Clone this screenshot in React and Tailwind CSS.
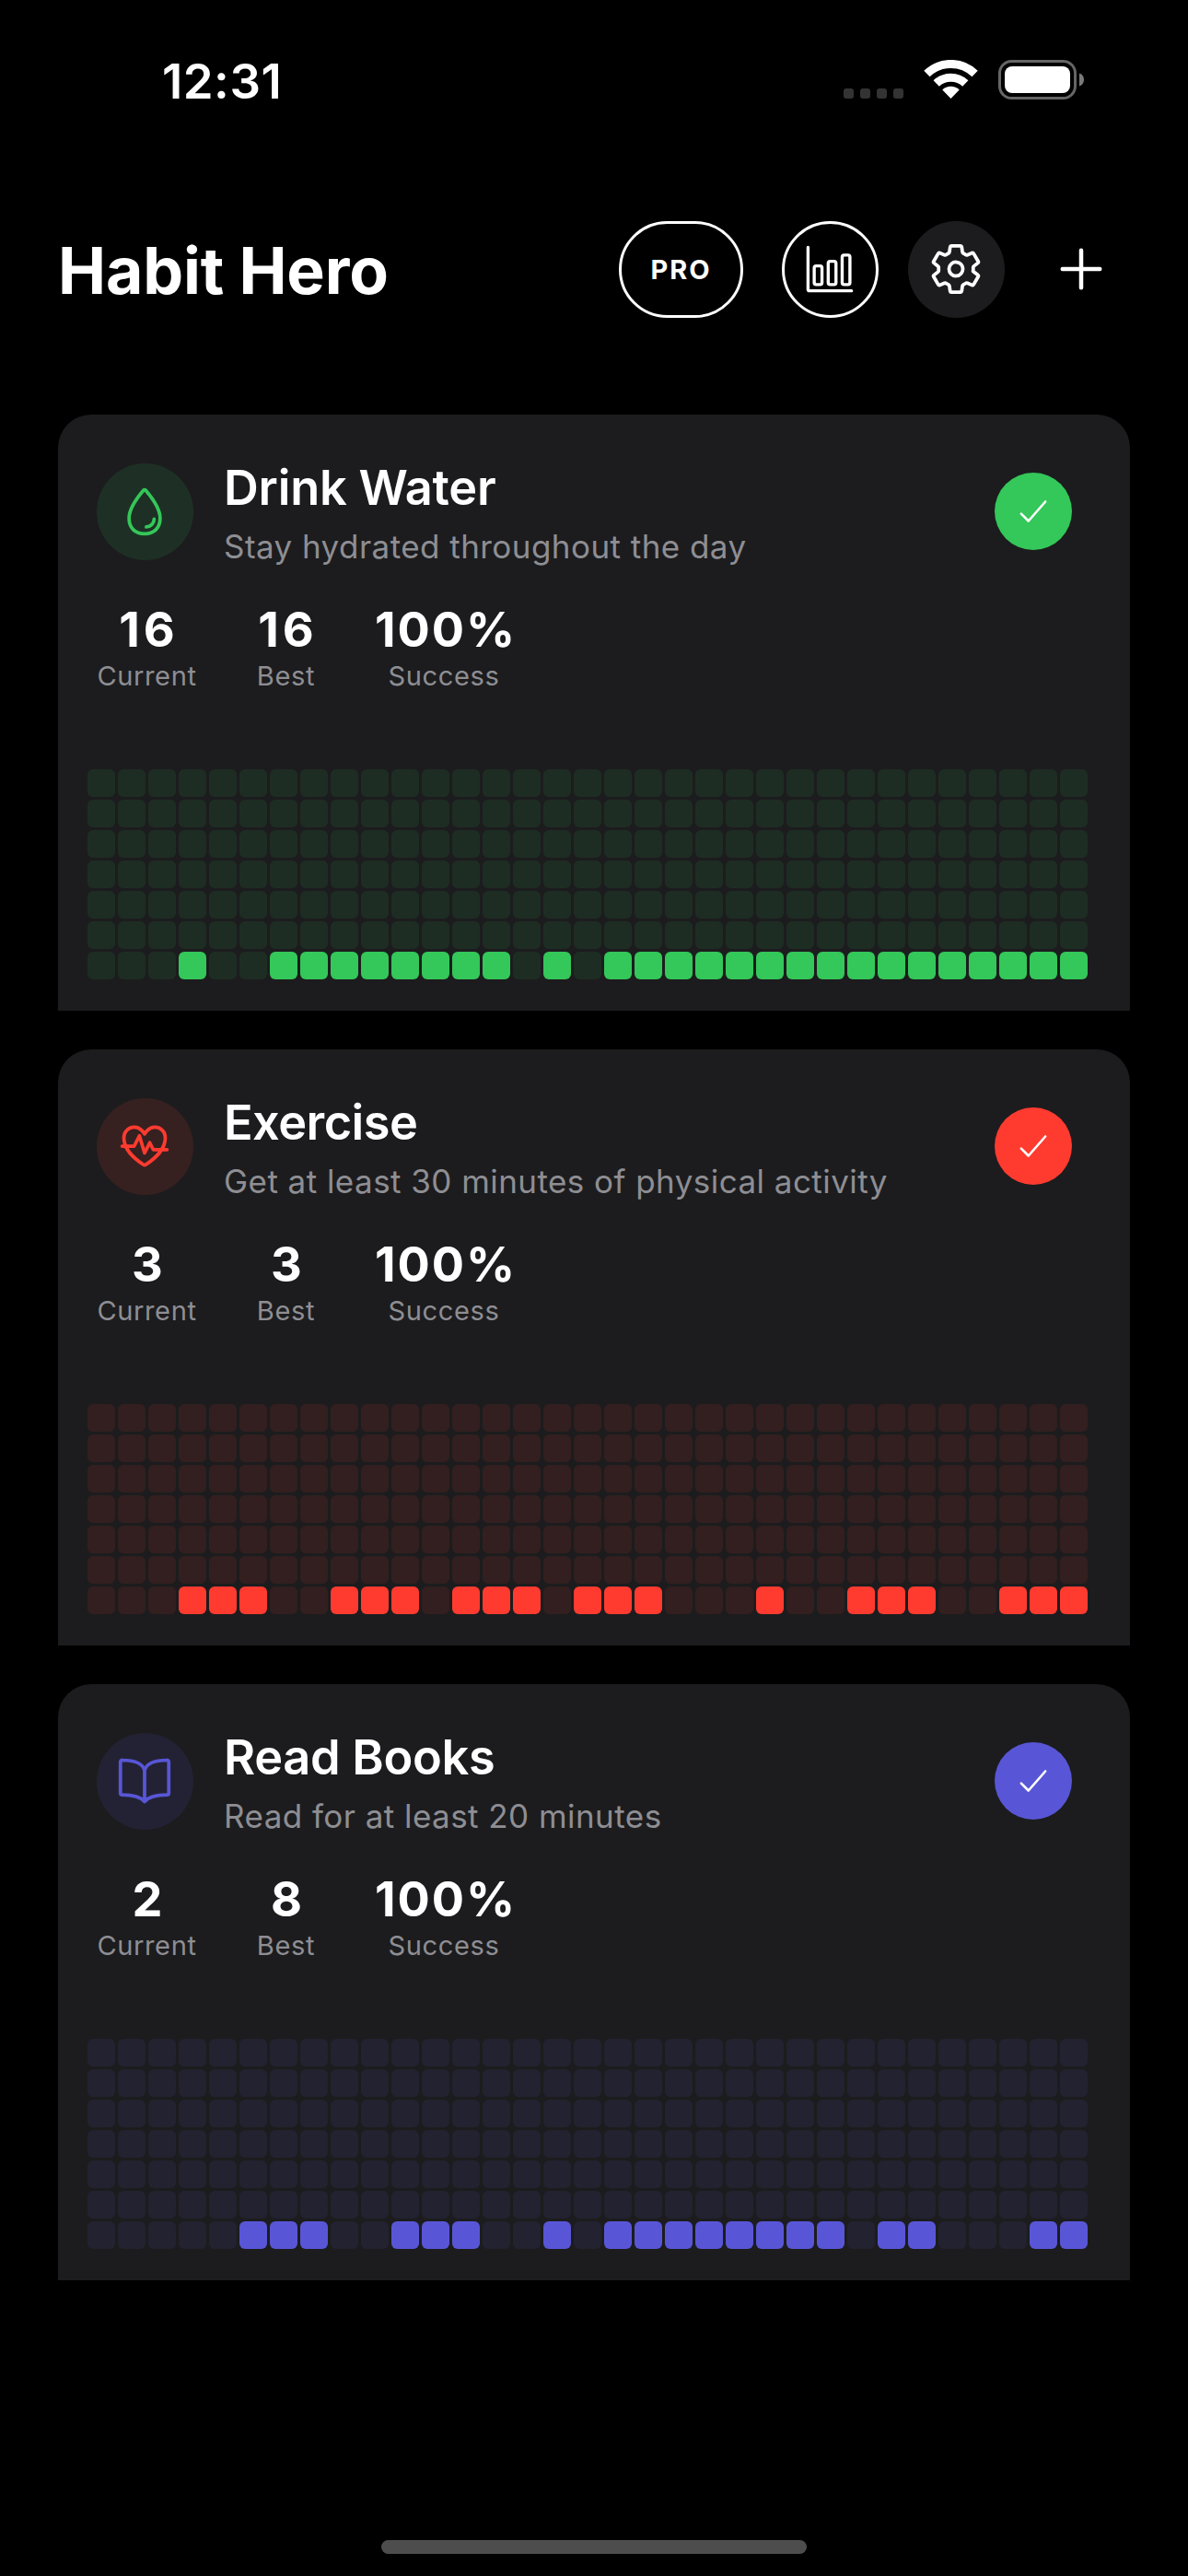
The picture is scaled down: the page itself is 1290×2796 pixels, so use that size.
import {
  IoAdd,
  IoBarChartOutline,
  IoBookOutline,
  IoCheckmark,
  IoFitnessOutline,
  IoSettingsOutline,
  IoWaterOutline,
} from "react-icons/io5";

const COLUMNS = 33;
const ROWS = 7;

const range = (from, to) => Array.from({ length: to - from + 1 }, (_, i) => from + i);

const HABITS = [
  {
    name: "Drink Water",
    description: "Stay hydrated throughout the day",
    Icon: IoWaterOutline,
    current: "16",
    best: "16",
    done: [3, ...range(6, 13), 15, ...range(17, 32)],
    tracking: "tracking-[-0.2px]",
    text: "text-[#34c759]",
    solid: "bg-[#34c759]",
    tint: "bg-[#34c759]/12",
    cell: "bg-[#34c759]/10",
  },
  {
    name: "Exercise",
    description: "Get at least 30 minutes of physical activity",
    Icon: IoFitnessOutline,
    current: "3",
    best: "3",
    done: [3, 4, 5, 8, 9, 10, 12, 13, 14, 16, 17, 18, 22, 25, 26, 27, 30, 31, 32],
    tracking: "tracking-[-0.55px]",
    text: "text-[#ff3b30]",
    solid: "bg-[#ff3b30]",
    tint: "bg-[#ff3b30]/12",
    cell: "bg-[#ff3b30]/10",
  },
  {
    name: "Read Books",
    description: "Read for at least 20 minutes",
    Icon: IoBookOutline,
    current: "2",
    best: "8",
    done: [5, 6, 7, 10, 11, 12, 15, ...range(17, 24), 26, 27, 31, 32],
    tracking: "tracking-[-0.3px]",
    text: "text-[#5856d6]",
    solid: "bg-[#5856d6]",
    tint: "bg-[#5856d6]/12",
    cell: "bg-[#5856d6]/10",
  },
];

function StatusBar() {
  return (
    <div className="flex h-[240px] items-start justify-between pr-[113px] pl-[176px]">
      <span className="mt-[58px] text-[52.7px] leading-[60px] font-semibold tracking-[0.5px]">
        12:31
      </span>
      <div className="mt-[65px] flex h-[43px] items-start">
        <div className="mt-[31px] flex gap-[7px]">
          {range(0, 3).map((i) => (
            <div key={i} className="size-[11px] rounded-[3px] bg-[#333333]" />
          ))}
        </div>
        <svg className="ml-[22px]" width="59" height="43" viewBox="-29.5 -42 59 43" fill="none">
          <path d="M-26.1 -27A37.5 37.5 0 0 1 26.1 -27" stroke="#fff" strokeWidth="9" />
          <path d="M-15.8 -16.4A22.8 22.8 0 0 1 15.8 -16.4" stroke="#fff" strokeWidth="9" />
          <path d="M0 0L-9.2 -9.5A13.2 13.2 0 0 1 9.2 -9.5Z" fill="#fff" />
        </svg>
        <svg className="ml-[22px]" width="93" height="43" viewBox="0 0 93 43" fill="none">
          <rect x="1.5" y="1.5" width="82" height="40" rx="13" stroke="#666" strokeWidth="3" />
          <rect x="7" y="7" width="71" height="29" rx="8" fill="#fff" />
          <path d="M88 14.5C91 15.5 93 18 93 21.5S91 27.500 88 28.500Z" fill="#7a7a7a" />
        </svg>
      </div>
    </div>
  );
}

function Header() {
  return (
    <header className="flex h-[105px] items-center px-[63px]">
      <h1 className="mt-[2px] flex-1 text-[69.7px] leading-[85px] font-bold tracking-[-0.15px]">
        Habit Hero
      </h1>
      <button className="flex h-[105px] w-[135px] items-center justify-center rounded-full border-3 border-white text-[29px] font-bold tracking-[2px]">
        PRO
      </button>
      <button className="ml-[42px] flex size-[105px] items-center justify-center rounded-full border-3 border-white">
        <IoBarChartOutline className="mr-px mb-px size-[54px]" />
      </button>
      <button className="ml-[32px] flex size-[105px] items-center justify-center rounded-full bg-[#1c1c1e]">
        <IoSettingsOutline className="mr-px mb-px size-[60px]" />
      </button>
      <button className="ml-[31px] flex size-[105px] items-center justify-center">
        <IoAdd className="mr-px mb-px size-[72px]" />
      </button>
    </header>
  );
}

// Letter spacing of the figures by length, with padding in front to keep them centred.
const FIGURE_SPACING = {
  1: "pl-px",
  2: "tracking-[4px] pl-[4px]",
  4: "tracking-[2px] pl-[4px]",
};

function Stat({ value, label, width }) {
  return (
    <div className={`flex flex-col items-center whitespace-nowrap ${width}`}>
      <span
        className={`text-[52.3px] leading-[62px] font-bold ${FIGURE_SPACING[value.length]}`}
      >
        {value}
      </span>
      <span className="mt-px text-[29.1px] leading-[37px] tracking-[0.6px] text-[#8e8e93]">
        {label}
      </span>
    </div>
  );
}

function HabitCard({ habit }) {
  const { Icon } = habit;
  return (
    <section className="h-[647px] rounded-t-[36px] bg-[#1c1c1e]">
      <div className="flex h-[202px] items-start pt-[47px] pr-[63px] pl-[42px]">
        <div
          className={`mt-[6px] flex size-[105px] items-center justify-center rounded-full ${habit.tint} ${habit.text}`}
        >
          <Icon className="mr-px mb-px size-[60px]" />
        </div>
        <div className="ml-[33px] flex-1">
          <h2 className={`text-[52.3px] leading-[64px] font-semibold ${habit.tracking}`}>
            {habit.name}
          </h2>
          <p className="mt-[10px] text-[35px] leading-[44px] tracking-[0.45px] text-[#8e8e93]">
            {habit.description}
          </p>
        </div>
        <button
          className={`mt-[16px] flex size-[84px] items-center justify-center rounded-full ${habit.solid}`}
        >
          <IoCheckmark className="size-[42px]" />
        </button>
      </div>
      <div className="flex h-[183px] gap-[64px] pl-[42px]">
        <Stat value={habit.current} label="Current" width="w-[109px]" />
        <Stat value={habit.best} label="Best" width="w-[65px]" />
        <Stat value="100%" label="Success" width="w-[150px]" />
      </div>
      <div className="ml-[32px] grid w-max grid-cols-[repeat(33,30px)] gap-[3px]">
        {range(0, COLUMNS * ROWS - 1).map((i) => {
          const filled = i >= COLUMNS * (ROWS - 1) && habit.done.includes(i % COLUMNS);
          return (
            <div
              key={i}
              className={`size-[30px] rounded-[6px] ${filled ? habit.solid : habit.cell}`}
            />
          );
        })}
      </div>
    </section>
  );
}

export default function App() {
  return (
    <div className="flex h-[2796px] w-[1290px] flex-col overflow-hidden bg-black font-['Inter','Liberation_Sans',sans-serif] text-white">
      <StatusBar />
      <Header />
      <main className="mt-[105px] flex flex-1 flex-col gap-[42px] px-[63px]">
        {HABITS.map((habit) => (
          <HabitCard key={habit.name} habit={habit} />
        ))}
      </main>
      <div className="mx-auto mb-[24px] h-[15px] w-[462px] rounded-full bg-[#4d4d4d]" />
    </div>
  );
}
